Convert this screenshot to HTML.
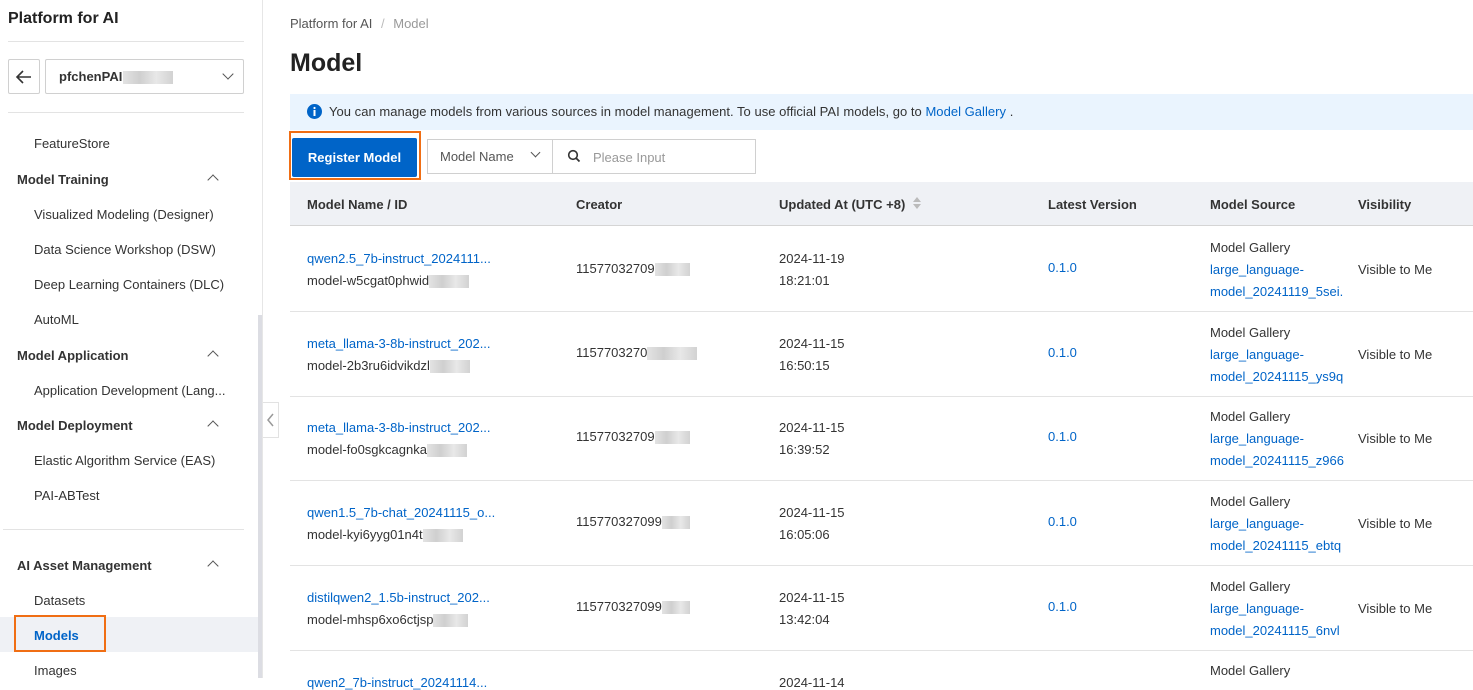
<!DOCTYPE html>
<html><head><meta charset="utf-8"><style>
*{margin:0;padding:0;box-sizing:border-box}
body{width:1473px;height:678px;overflow:hidden;background:#fff;font-family:"Liberation Sans",sans-serif;font-size:13px;color:#333;position:relative}
.a{position:absolute;white-space:nowrap}
.b{color:#0064c8}
.blur{display:inline-block;height:13px;background:linear-gradient(90deg,#e3e3e3,#cfcfcf,#e8e8e8,#d2d2d2);vertical-align:middle}
.hl{position:absolute;height:1px;background:#e3e3e3}
.chev{position:absolute;width:8px;height:8px;border-left:1.5px solid #555;border-top:1.5px solid #555;transform:rotate(45deg)}
</style></head><body>
<div class="a" style="left:8px;top:10px;font-size:16px;font-weight:bold;color:#222">Platform for AI</div>
<div class="hl" style="left:8px;top:41px;width:236px"></div>
<div class="a" style="left:8px;top:59px;width:32px;height:35px;border:1px solid #d0d0d0;border-radius:2px"></div>
<svg class="a" style="left:14px;top:67px" width="20" height="20" viewBox="0 0 20 20"><path d="M17 10H3M9 4L3 10L9 16" fill="none" stroke="#333" stroke-width="1.6"/></svg>
<div class="a" style="left:45px;top:59px;width:199px;height:35px;border:1px solid #d0d0d0;border-radius:2px"></div>
<div class="a" style="left:59px;top:69px;font-weight:bold;font-size:13px;color:#333">pfchenPAI<span class="blur" style="width:50px;margin-left:1px"></span></div>
<div class="chev" style="left:224px;top:70px;transform:rotate(225deg)"></div>
<div class="hl" style="left:8px;top:112px;width:236px"></div>
<div class="a" style="left:34px;top:136px">FeatureStore</div>
<div class="a" style="left:17px;top:172px;font-weight:600">Model Training</div>
<div class="chev" style="left:209px;top:176px"></div>
<div class="a" style="left:34px;top:207px">Visualized Modeling (Designer)</div>
<div class="a" style="left:34px;top:242px">Data Science Workshop (DSW)</div>
<div class="a" style="left:34px;top:277px">Deep Learning Containers (DLC)</div>
<div class="a" style="left:34px;top:312px">AutoML</div>
<div class="a" style="left:17px;top:348px;font-weight:600">Model Application</div>
<div class="chev" style="left:209px;top:352px"></div>
<div class="a" style="left:34px;top:383px">Application Development (Lang...</div>
<div class="a" style="left:17px;top:418px;font-weight:600">Model Deployment</div>
<div class="chev" style="left:209px;top:422px"></div>
<div class="a" style="left:34px;top:453px">Elastic Algorithm Service (EAS)</div>
<div class="a" style="left:34px;top:488px">PAI-ABTest</div>
<div class="hl" style="left:3px;top:529px;width:241px"></div>
<div class="a" style="left:17px;top:558px;font-weight:600">AI Asset Management</div>
<div class="chev" style="left:209px;top:562px"></div>
<div class="a" style="left:34px;top:593px">Datasets</div>
<div class="a" style="left:0;top:617px;width:258px;height:35px;background:#eff1f5"></div>
<div class="a" style="left:14px;top:615px;width:92px;height:37px;border:2px solid #f06e14"></div>
<div class="a b" style="left:34px;top:628px;font-weight:bold">Models</div>
<div class="a" style="left:34px;top:663px">Images</div>
<div class="a" style="left:258px;top:315px;width:4px;height:363px;background:#dcdde3"></div>
<div class="a" style="left:262px;top:0;width:1px;height:678px;background:#e6e6e6"></div>
<div class="a" style="left:263px;top:402px;width:16px;height:36px;border:1px solid #e2e2e2;border-left:none;background:#fff"></div>
<svg class="a" style="left:266px;top:412px" width="10" height="16"><path d="M7 2L2 8L7 14" fill="none" stroke="#999" stroke-width="1.5"/></svg>
<div class="a" style="left:290px;top:16px;color:#555">Platform for AI <span style="color:#bbb;margin:0 5px">/</span> <span style="color:#999">Model</span></div>
<div class="a" style="left:290px;top:49px;font-size:25px;font-weight:600;color:#222">Model</div>
<div class="a" style="left:290px;top:94px;width:1183px;height:36px;background:#eaf4fe"></div>
<svg class="a" style="left:307px;top:104px" width="15" height="15"><circle cx="7.5" cy="7.5" r="7.5" fill="#0064c8"/><rect x="6.5" y="6" width="2" height="6" fill="#fff"/><circle cx="7.5" cy="4" r="1.1" fill="#fff"/></svg>
<div class="a" style="left:329px;top:104px;letter-spacing:0.03px">You can manage models from various sources in model management. To use official PAI models, go to <span class="b">Model Gallery</span> .</div>
<div class="a" style="left:289px;top:131px;width:132px;height:49px;border:2px solid #f06e14"></div>
<div class="a" style="left:292px;top:138px;width:125px;height:39px;background:#0064c8;border-radius:2px;color:#fff;font-weight:bold;text-align:center;line-height:39px">Register Model</div>
<div class="a" style="left:427px;top:139px;width:329px;height:35px;border:1px solid #d0d0d0"></div>
<div class="a" style="left:552px;top:139px;width:1px;height:35px;background:#d0d0d0"></div>
<div class="a" style="left:440px;top:149px;color:#555">Model Name</div>
<div class="chev" style="left:532px;top:149px;transform:rotate(225deg);width:7px;height:7px"></div>
<svg class="a" style="left:567px;top:149px" width="14" height="14"><circle cx="6" cy="6" r="4.3" fill="none" stroke="#333" stroke-width="1.6"/><path d="M9 9L12.5 12.5" stroke="#333" stroke-width="1.8"/></svg>
<div class="a" style="left:593px;top:150px;color:#999">Please Input</div>
<div class="a" style="left:290px;top:182px;width:1183px;height:44px;background:#eff1f5;border-bottom:1px solid #d5d5d5"></div>
<div class="a" style="left:307px;top:197px;font-weight:600">Model Name / ID</div>
<div class="a" style="left:576px;top:197px;font-weight:600">Creator</div>
<div class="a" style="left:779px;top:197px;font-weight:600">Updated At (UTC +8)</div>
<svg class="a" style="left:912px;top:196px" width="10" height="14"><path d="M1 6L5 1L9 6Z M1 8L5 13L9 8Z" fill="#bbb"/></svg>
<div class="a" style="left:1048px;top:197px;font-weight:600">Latest Version</div>
<div class="a" style="left:1210px;top:197px;font-weight:600">Model Source</div>
<div class="a" style="left:1358px;top:197px;font-weight:600">Visibility</div>
<div class="hl" style="left:290px;top:311px;width:1183px"></div>
<div class="hl" style="left:290px;top:396px;width:1183px"></div>
<div class="hl" style="left:290px;top:480px;width:1183px"></div>
<div class="hl" style="left:290px;top:565px;width:1183px"></div>
<div class="hl" style="left:290px;top:650px;width:1183px"></div>

<div class="a b" style="left:307px;top:251px">qwen2.5_7b-instruct_2024111...</div>
<div class="a" style="left:307px;top:273px">model-w5cgat0phwid<span class="blur" style="width:40px"></span></div>
<div class="a" style="left:576px;top:261px">11577032709<span class="blur" style="width:35px"></span></div>
<div class="a" style="left:779px;top:251px">2024-11-19</div><div class="a" style="left:779px;top:273px">18:21:01</div>
<div class="a b" style="left:1048px;top:260px">0.1.0</div>
<div class="a" style="left:1210px;top:240px">Model Gallery</div>
<div class="a b" style="left:1210px;top:262px">large_language-</div>
<div class="a b" style="left:1210px;top:284px">model_20241119_5sei.</div>
<div class="a" style="left:1358px;top:262px">Visible to Me</div>

<div class="a b" style="left:307px;top:336px">meta_llama-3-8b-instruct_202...</div>
<div class="a" style="left:307px;top:358px">model-2b3ru6idvikdzl<span class="blur" style="width:40px"></span></div>
<div class="a" style="left:576px;top:345px">1157703270<span class="blur" style="width:50px"></span></div>
<div class="a" style="left:779px;top:336px">2024-11-15</div><div class="a" style="left:779px;top:358px">16:50:15</div>
<div class="a b" style="left:1048px;top:345px">0.1.0</div>
<div class="a" style="left:1210px;top:325px">Model Gallery</div>
<div class="a b" style="left:1210px;top:347px">large_language-</div>
<div class="a b" style="left:1210px;top:369px">model_20241115_ys9q</div>
<div class="a" style="left:1358px;top:347px">Visible to Me</div>

<div class="a b" style="left:307px;top:420px">meta_llama-3-8b-instruct_202...</div>
<div class="a" style="left:307px;top:442px">model-fo0sgkcagnka<span class="blur" style="width:40px"></span></div>
<div class="a" style="left:576px;top:429px">11577032709<span class="blur" style="width:35px"></span></div>
<div class="a" style="left:779px;top:420px">2024-11-15</div><div class="a" style="left:779px;top:442px">16:39:52</div>
<div class="a b" style="left:1048px;top:429px">0.1.0</div>
<div class="a" style="left:1210px;top:409px">Model Gallery</div>
<div class="a b" style="left:1210px;top:431px">large_language-</div>
<div class="a b" style="left:1210px;top:453px">model_20241115_z966</div>
<div class="a" style="left:1358px;top:431px">Visible to Me</div>

<div class="a b" style="left:307px;top:505px">qwen1.5_7b-chat_20241115_o...</div>
<div class="a" style="left:307px;top:527px">model-kyi6yyg01n4t<span class="blur" style="width:40px"></span></div>
<div class="a" style="left:576px;top:514px">115770327099<span class="blur" style="width:28px"></span></div>
<div class="a" style="left:779px;top:505px">2024-11-15</div><div class="a" style="left:779px;top:527px">16:05:06</div>
<div class="a b" style="left:1048px;top:514px">0.1.0</div>
<div class="a" style="left:1210px;top:494px">Model Gallery</div>
<div class="a b" style="left:1210px;top:516px">large_language-</div>
<div class="a b" style="left:1210px;top:538px">model_20241115_ebtq</div>
<div class="a" style="left:1358px;top:516px">Visible to Me</div>

<div class="a b" style="left:307px;top:590px">distilqwen2_1.5b-instruct_202...</div>
<div class="a" style="left:307px;top:612px">model-mhsp6xo6ctjsp<span class="blur" style="width:35px"></span></div>
<div class="a" style="left:576px;top:599px">115770327099<span class="blur" style="width:28px"></span></div>
<div class="a" style="left:779px;top:590px">2024-11-15</div><div class="a" style="left:779px;top:612px">13:42:04</div>
<div class="a b" style="left:1048px;top:599px">0.1.0</div>
<div class="a" style="left:1210px;top:579px">Model Gallery</div>
<div class="a b" style="left:1210px;top:601px">large_language-</div>
<div class="a b" style="left:1210px;top:623px">model_20241115_6nvl</div>
<div class="a" style="left:1358px;top:601px">Visible to Me</div>

<div class="a b" style="left:307px;top:675px">qwen2_7b-instruct_20241114...</div>
<div class="a" style="left:779px;top:675px">2024-11-14</div>
<div class="a" style="left:1210px;top:663px">Model Gallery</div>
</body></html>
